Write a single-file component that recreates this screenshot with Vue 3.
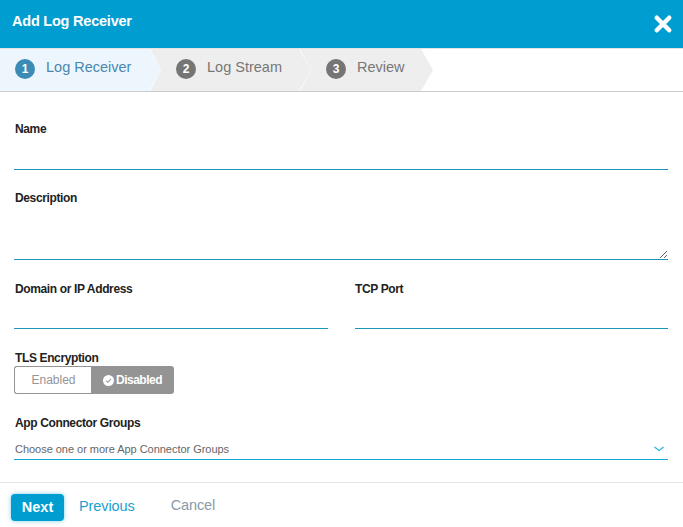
<template>
	<div class="modal">
		<div class="modal-header">
			<span class="modal-title">Add Log Receiver</span>
			<svg class="close-icon" viewBox="0 0 16 16" @click="closed = true">
				<path d="M3 3 L13 13 M13 3 L3 13" />
			</svg>
		</div>

		<!-- wizard steps -->
		<div class="steps">
			<div v-for="(step, i) in steps" :key="step.label" class="step" :class="{ active: i === 0 }" :style="{ width: step.width + 'px' }">
				<span class="step-num">{{ i + 1 }}</span>
				<span class="step-label">{{ step.label }}</span>
			</div>
		</div>

		<div class="form">
			<div class="field name-field">
				<label>Name</label>
				<input type="text" class="text-input" />
			</div>
			<div class="field desc-field">
				<label>Description</label>
				<textarea class="text-area"></textarea>
			</div>
			<div class="two-col">
				<div class="field">
					<label>Domain or IP Address</label>
					<input type="text" class="text-input" />
				</div>
				<div class="field port-field">
					<label>TCP Port</label>
					<input type="text" class="text-input" />
				</div>
			</div>
			<div class="field tls-field">
				<label>TLS Encryption</label>
				<div class="toggle">
					<span class="toggle-off">Enabled</span>
					<span class="toggle-on">
						<svg class="check" viewBox="0 0 12 12">
							<circle cx="6" cy="6" r="6" fill="#fff" />
							<path d="M3.4 6.2 L5.3 8 L8.7 4.2" fill="none" stroke="#949494" stroke-width="1.1" />
						</svg>
						Disabled
					</span>
				</div>
			</div>
			<div class="field group-field">
				<label>App Connector Groups</label>
				<div class="select">
					<span>Choose one or more App Connector Groups</span>
					<svg class="chevron" viewBox="0 0 10 6">
						<path d="M0.5 1 L5 4.5 L9.5 1" />
					</svg>
				</div>
			</div>
		</div>

		<div class="footer">
			<button class="btn-next">Next</button>
			<a class="link-prev">Previous</a>
			<a class="link-cancel">Cancel</a>
		</div>
	</div>
</template>

<script setup>
import { ref } from 'vue'

const closed = ref(false)

const steps = [
	{ label: 'Log Receiver', width: 161 },
	{ label: 'Log Stream', width: 161 },
	{ label: 'Review', width: 133 },
]
</script>

<style>
body {
	background: #fff;
}
</style>

<style scoped>
.modal {
	width: 683px;
	height: 527px;
	display: flex;
	flex-direction: column;
	font-family: "Liberation Sans", Arial, sans-serif;
	overflow: hidden;
}

.modal-header {
	height: 48px;
	background: #009dd1;
	display: flex;
	justify-content: space-between;
	align-items: center;
	padding: 0 10px 0 12px;
	box-sizing: border-box;
	color: #fff;
	flex: none;
}

.modal-title {
	font-size: 14.5px;
	font-weight: bold;
	letter-spacing: -0.22px;
	margin-top: -6px;
}

.close-icon {
	width: 20px;
	height: 20px;
}

.close-icon path {
	fill: none;
	stroke: #fff;
	stroke-width: 3.6;
	stroke-linecap: round;
}

.steps {
	height: 44px;
	box-sizing: border-box;
	border-top: 1px solid #e4e4e4;
	border-bottom: 1px solid #ccc;
	display: flex;
	flex: none;
}

.step {
	height: 42px;
	margin-right: -11px;
	padding-left: 15px;
	box-sizing: border-box;
	display: flex;
	align-items: center;
	background: #eee;
	color: #777;
	font-size: 14.5px;
	clip-path: polygon(0 0, calc(100% - 12px) 0, 100% 50%, calc(100% - 12px) 100%, 0 100%, 11px 50%);
}

.step:first-child {
	clip-path: polygon(0 0, calc(100% - 12px) 0, 100% 50%, calc(100% - 12px) 100%, 0 100%);
}

.step:nth-child(2),
.step:nth-child(3) {
	padding-left: 26px;
}

.step.active {
	background: #edf6fd;
	color: #4a86ad;
	position: relative;
	z-index: 1;
}

.step-num {
	width: 20px;
	height: 20px;
	border-radius: 50%;
	background: #757575;
	color: #fff;
	font-size: 12px;
	font-weight: bold;
	display: flex;
	align-items: center;
	justify-content: center;
	margin-right: 11px;
	margin-top: -3px;
}

.step.active .step-num {
	background: #3c8bb5;
}

.step-label {
	margin-top: -7px;
}

.form {
	flex: 1;
	padding: 0 15px 0 14px;
}

.field label {
	display: block;
	font-size: 12px;
	font-weight: bold;
	letter-spacing: -0.37px;
	color: #222;
	line-height: 14px;
	padding-left: 1px;
}

.field.port-field label {
	padding-left: 0;
}

.text-input {
	display: block;
	width: 100%;
	height: 26px;
	box-sizing: border-box;
	border: 0;
	border-bottom: 1px solid #1a96bd;
	outline: none;
	padding: 0;
	margin-top: 8px;
}

.two-col .text-input {
	margin-top: 7px;
}

.name-field {
	padding-top: 30px;
}

.desc-field {
	padding-top: 21px;
}

.text-area {
	display: block;
	width: 100%;
	height: 48px;
	box-sizing: border-box;
	border: 0;
	border-bottom: 1px solid #1a96bd;
	outline: none;
	padding: 0;
	margin-top: 7px;
	resize: vertical;
}

.two-col {
	display: grid;
	grid-template-columns: 314px 313px;
	column-gap: 27px;
	padding-top: 22px;
}

.tls-field {
	padding-top: 22px;
}

.toggle {
	display: flex;
	width: 160px;
	height: 28px;
	margin-top: 1px;
	font-size: 12px;
	box-sizing: border-box;
}

.toggle-off {
	width: 77px;
	box-sizing: border-box;
	border: 1px solid #949494;
	border-right: 0;
	border-radius: 3px 0 0 3px;
	color: #949494;
	padding-left: 1px;
	display: flex;
	align-items: center;
	justify-content: center;
}

.toggle-on {
	flex: 1;
	background: #949494;
	border-radius: 0 3px 3px 0;
	color: #fff;
	font-weight: bold;
	letter-spacing: -0.5px;
	display: flex;
	align-items: center;
	justify-content: center;
	gap: 2px;
}

.check {
	width: 11px;
	height: 11px;
}

.group-field {
	padding-top: 22px;
}

.select {
	height: 25px;
	margin-top: 5px;
	padding-top: 4px;
	box-sizing: border-box;
	border-bottom: 1px solid #10a5d6;
	display: flex;
	justify-content: space-between;
	align-items: center;
	font-size: 11px;
	letter-spacing: -0.03px;
	color: #666;
}

.select span {
	padding-left: 1px;
}

.chevron {
	width: 10px;
	height: 6px;
	margin-right: 4px;
}

.chevron path {
	fill: none;
	stroke: #2bb2e0;
	stroke-width: 1.2;
}

.footer {
	height: 45px;
	flex: none;
	box-sizing: border-box;
	border-top: 1px solid #e4e4e4;
	display: flex;
	align-items: center;
	padding-left: 11px;
	font-size: 14.5px;
}

.btn-next {
	width: 53px;
	height: 27px;
	margin-top: 4px;
	border: 0;
	border-radius: 4px;
	background: #009dd1;
	color: #fff;
	font-family: inherit;
	font-size: 14.5px;
	font-weight: bold;
	box-shadow: 0 0 4px rgba(0, 157, 209, 0.5);
}

.link-prev {
	color: #1a9fd0;
	margin-left: 15px;
	margin-top: 2px;
	letter-spacing: -0.1px;
}

.link-cancel {
	color: #8a9aa8;
	margin-left: 36px;
	letter-spacing: -0.1px;
}
</style>
